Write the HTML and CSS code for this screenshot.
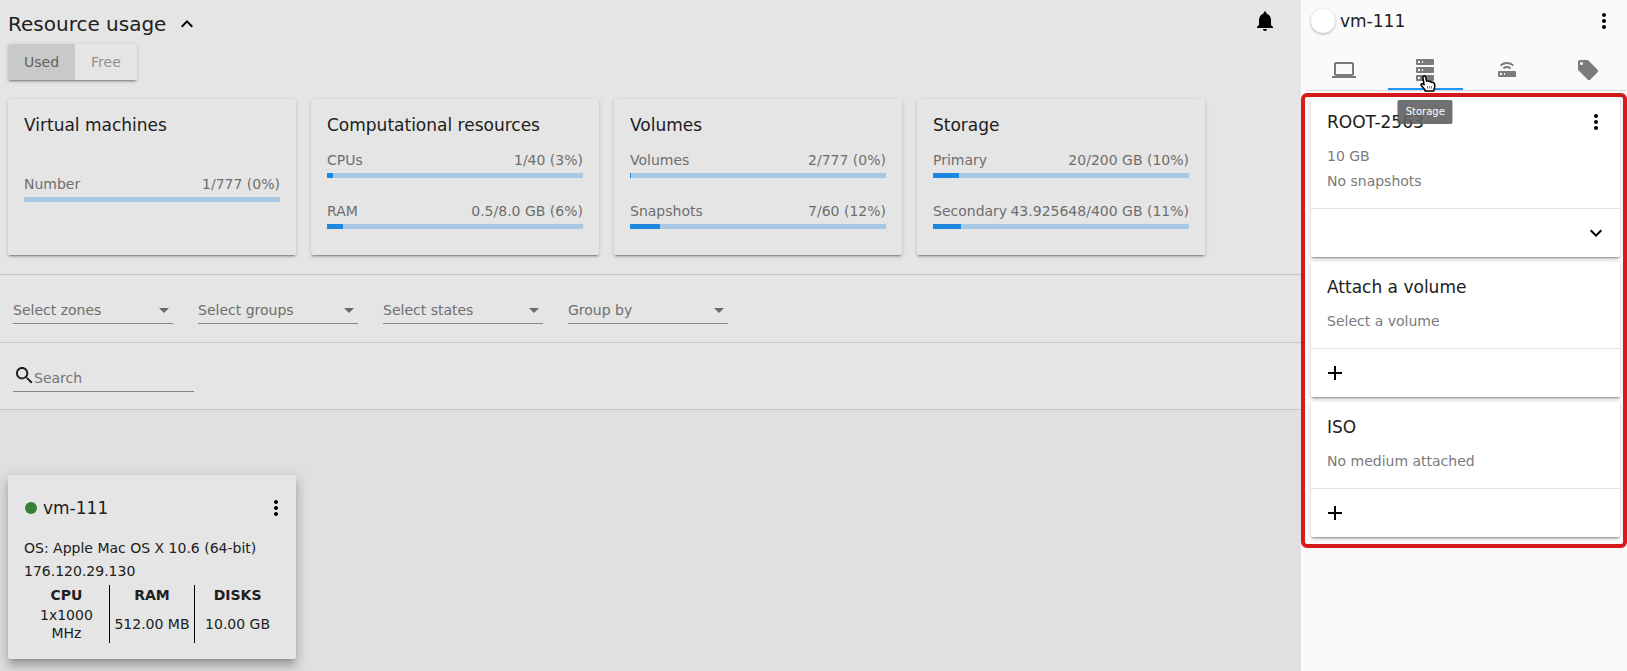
FILE: index.html
```html
<!DOCTYPE html>
<html lang="en">
<head>
<meta charset="utf-8">
<meta name="viewport" content="width=device-width, initial-scale=1">
<title>Virtual machines</title>
<link rel="stylesheet" href="styles.css">
</head>
<body>
<svg class="sprite" aria-hidden="true">
  <symbol id="dots" viewBox="0 0 24 24"><path d="M12 8c1.100 0 2-.9 2-2s-.9-2-2-2-2 .9-2 2 .9 2 2 2zm0 2c-1.100 0-2 .9-2 2s.9 2 2 2 2-.9 2-2-.9-2-2-2zm0 6c-1.100 0-2 .9-2 2s.9 2 2 2 2-.9 2-2-.9-2-2-2z"/></symbol>
  <symbol id="plus" viewBox="0 0 24 24"><path d="M19 13h-6v6h-2v-6H5v-2h6V5h2v6h6v2z"/></symbol>
  <symbol id="arrow" viewBox="0 0 10 5"><path d="M0 0h10L5 5z"/></symbol>
</svg>
<div class="app">
  <main class="main">
    <section class="usage">
      <header class="usage-header">
        <h1 class="usage-title">Resource usage</h1>
        <button class="icon-button" aria-label="Collapse">
          <svg class="icon" viewBox="0 0 24 24"><path d="M12 8l-6 6 1.410 1.410L12 10.830l4.590 4.580L18 14z"/></svg>
        </button>
        <button class="icon-button bell" aria-label="Notifications">
          <svg class="icon" viewBox="0 0 24 24"><path d="M12 22c1.100 0 2-.9 2-2h-4c0 1.100.89 2 2 2zm6-6v-5c0-3.070-1.640-5.640-4.500-6.320V4c0-.83-.67-1.500-1.500-1.500s-1.500.67-1.500 1.500v.68C7.630 5.360 6 7.920 6 11v5l-2 2v1h16v-1l-2-2z"/></svg>
        </button>
      </header>
      <div class="toggle">
        <button class="toggle-option selected" aria-pressed="true">Used</button>
        <button class="toggle-option" aria-pressed="false">Free</button>
      </div>
      <div class="usage-cards">
        <article class="card usage-card">
          <h2 class="card-title">Virtual machines</h2>
          <div class="meters">
            <div><div class="meter-label"><span>Number</span><span>1/777 (0%)</span></div><div class="bar"><div class="bar-fill" style="width:0%"></div></div></div>
          </div>
        </article>
        <article class="card usage-card">
          <h2 class="card-title">Computational resources</h2>
          <div class="meters">
            <div><div class="meter-label"><span>CPUs</span><span>1/40 (3%)</span></div><div class="bar"><div class="bar-fill" style="width:2.5%"></div></div></div>
            <div><div class="meter-label"><span>RAM</span><span>0.5/8.0 GB (6%)</span></div><div class="bar"><div class="bar-fill" style="width:6.25%"></div></div></div>
          </div>
        </article>
        <article class="card usage-card">
          <h2 class="card-title">Volumes</h2>
          <div class="meters">
            <div><div class="meter-label"><span>Volumes</span><span>2/777 (0%)</span></div><div class="bar"><div class="bar-fill" style="width:0.26%"></div></div></div>
            <div><div class="meter-label"><span>Snapshots</span><span>7/60 (12%)</span></div><div class="bar"><div class="bar-fill" style="width:11.67%"></div></div></div>
          </div>
        </article>
        <article class="card usage-card">
          <h2 class="card-title">Storage</h2>
          <div class="meters">
            <div><div class="meter-label"><span>Primary</span><span>20/200 GB (10%)</span></div><div class="bar"><div class="bar-fill" style="width:10%"></div></div></div>
            <div><div class="meter-label"><span>Secondary</span><span>43.925648/400 GB (11%)</span></div><div class="bar"><div class="bar-fill" style="width:10.98%"></div></div></div>
          </div>
        </article>
      </div>
    </section>
    <section class="filters">
      <div class="select-field"><select class="select" aria-label="Select zones"><option>Select zones</option></select><svg class="select-arrow"><use href="#arrow"/></svg></div>
      <div class="select-field"><select class="select" aria-label="Select groups"><option>Select groups</option></select><svg class="select-arrow"><use href="#arrow"/></svg></div>
      <div class="select-field"><select class="select" aria-label="Select states"><option>Select states</option></select><svg class="select-arrow"><use href="#arrow"/></svg></div>
      <div class="select-field"><select class="select" aria-label="Group by"><option>Group by</option></select><svg class="select-arrow"><use href="#arrow"/></svg></div>
    </section>
    <section class="search">
      <label class="search-field">
        <svg class="search-icon" viewBox="3 3 18 18"><path d="M15.500 14h-.79l-.28-.27C15.410 12.590 16 11.110 16 9.500 16 5.910 13.090 3 9.500 3S3 5.910 3 9.500 5.910 16 9.500 16c1.610 0 3.090-.59 4.230-1.570l.27.28v.79l5 4.990L20.490 19l-4.990-5zm-6 0C7.010 14 5 11.990 5 9.500S7.010 5 9.500 5 14 7.010 14 9.500 11.990 14 9.500 14z"/></svg>
        <input class="search-input" type="text" placeholder="Search" aria-label="Search">
      </label>
    </section>
    <section class="machines">
      <article class="card vm-card">
        <header class="vm-header">
          <span class="status"></span>
          <h2 class="card-title">vm-111</h2>
          <button class="icon-button push" aria-label="Actions for vm-111"><svg class="icon"><use href="#dots"/></svg></button>
        </header>
        <p class="vm-line">OS: Apple Mac OS X 10.6 (64-bit)</p>
        <p class="vm-line">176.120.29.130</p>
        <table class="specs">
          <thead><tr><th>CPU</th><th>RAM</th><th>DISKS</th></tr></thead>
          <tbody><tr><td>1x1000 MHz</td><td>512.00 MB</td><td>10.00 GB</td></tr></tbody>
        </table>
      </article>
    </section>
  </main>
  <aside class="sidebar">
    <header class="side-header">
      <span class="avatar"></span>
      <h2 class="card-title">vm-111</h2>
      <button class="icon-button push" aria-label="Actions"><svg class="icon"><use href="#dots"/></svg></button>
    </header>
    <nav class="tabs">
      <button class="tab" aria-label="Virtual machine"><svg class="icon" viewBox="0 0 24 24"><path d="M20 18c1.100 0 1.990-.9 1.990-2L22 6c0-1.100-.9-2-2-2H4c-1.100 0-2 .9-2 2v10c0 1.100.9 2 2 2H0v2h24v-2h-4zM4 6h16v10H4V6z"/></svg></button>
      <button class="tab active" aria-label="Storage"><svg class="icon" viewBox="0 0 24 24"><path d="M4 1h16a1 1 0 0 1 1 1v4a1 1 0 0 1-1 1H4a1 1 0 0 1-1-1V2a1 1 0 0 1 1-1M4 9h16a1 1 0 0 1 1 1v4a1 1 0 0 1-1 1H4a1 1 0 0 1-1-1v-4a1 1 0 0 1 1-1M4 17h16a1 1 0 0 1 1 1v4a1 1 0 0 1-1 1H4a1 1 0 0 1-1-1v-4a1 1 0 0 1 1-1M9 5h1V3H9v2M9 13h1v-2H9v2M9 21h1v-2H9v2M5 3v2h2V3H5M5 11v2h2v-2H5M5 19v2h2v-2H5z"/></svg>
        <svg class="pointer" viewBox="0 0 16 17"><path d="M3.200 1.300C4.200.5 5.500 1 5.700 2.200L6.500 6.200c.8-.6 2-.4 2.500.4.900-.4 2-.1 2.500.7 1.200-.3 2.700.2 3 1.500.4 1.700.3 3.400-.1 4.800L13.600 16H5v-1.200L1.200 10.600c-.6-.8-.2-1.700.6-1.900.8-.2 1.600.2 2.300 1L2.900 3c-.1-.7-.1-1.300.3-1.700z" fill="#fff" stroke="#000" stroke-width="1.500" stroke-linejoin="round"/><path d="M7.500 11v2.500M9.500 11v2.500M11.500 11v2.500" stroke="#555" fill="none" stroke-width=".8"/></svg>
        <span class="tooltip" role="tooltip">Storage</span>
      </button>
      <button class="tab" aria-label="Network"><svg class="icon" viewBox="0 0 24 24"><path d="M4 13h16a1 1 0 0 1 1 1v4a1 1 0 0 1-1 1H4a1 1 0 0 1-1-1v-4a1 1 0 0 1 1-1M9 17h1v-2H9v2M5 15v2h2v-2H5M19 6.930L17.600 8.340C16.150 6.890 14.150 6 11.930 6 9.720 6 7.720 6.890 6.270 8.340L4.870 6.930C6.680 5.120 9.180 4 11.930 4c2.760 0 5.260 1.120 7.070 2.930M16.170 9.760l-1.400 1.410C14.040 10.450 13.040 10 11.930 10s-2.110.45-2.830 1.170L7.700 9.760C8.780 8.670 10.280 8 11.930 8s3.150.67 4.240 1.760z"/></svg></button>
      <button class="tab" aria-label="Tags"><svg class="icon" viewBox="0 0 24 24"><path d="M5.500 7A1.500 1.500 0 0 1 4 5.500 1.500 1.500 0 0 1 5.500 4 1.500 1.500 0 0 1 7 5.500 1.500 1.500 0 0 1 5.500 7M21.410 11.580l-9-9C12.050 2.220 11.550 2 11 2H4c-1.110 0-2 .89-2 2v7c0 .55.22 1.050.59 1.410l8.990 9c.37.36.87.59 1.420.59s1.050-.23 1.410-.59l7-7c.37-.36.59-.86.59-1.410 0-.56-.23-1.060-.59-1.420z"/></svg></button>
    </nav>
    <div class="storage">
      <article class="card side-card">
        <div class="side-body">
          <div class="side-title"><h3 class="card-title">ROOT-2563</h3><button class="icon-button push" aria-label="Volume actions"><svg class="icon"><use href="#dots"/></svg></button></div>
          <p class="side-line">10 GB</p>
          <p class="side-line">No snapshots</p>
        </div>
        <footer class="side-footer"><button class="icon-button push" aria-label="Expand"><svg class="icon" viewBox="0 0 24 24"><path d="M16.590 8.590L12 13.170 7.410 8.590 6 10l6 6 6-6z"/></svg></button></footer>
      </article>
      <article class="card side-card">
        <div class="side-body">
          <div class="side-title"><h3 class="card-title">Attach a volume</h3></div>
          <p class="side-line">Select a volume</p>
        </div>
        <footer class="side-footer"><button class="icon-button" aria-label="Attach a volume"><svg class="icon"><use href="#plus"/></svg></button></footer>
      </article>
      <article class="card side-card">
        <div class="side-body">
          <div class="side-title"><h3 class="card-title">ISO</h3></div>
          <p class="side-line">No medium attached</p>
        </div>
        <footer class="side-footer"><button class="icon-button" aria-label="Attach ISO"><svg class="icon"><use href="#plus"/></svg></button></footer>
      </article>
    </div>
  </aside>
</div>
</body>
</html>
```
FILE: styles.css
```css
* { box-sizing: border-box; }

body {
  margin: 0;
  font-family: "DejaVu Sans", sans-serif;
  font-size: 14px;
  line-height: 18px;
  color: #202020;
}

h1, h2, h3, p { margin: 0; font-weight: 400; }

button, select, input { font: inherit; color: inherit; }

.sprite { display: none; }

.icon { display: block; width: 24px; height: 24px; fill: currentColor; }

.icon-button {
  padding: 0;
  border: 0;
  background: none;
  color: #000;
  cursor: pointer;
}

.push { margin-left: auto; }

.app { display: flex; min-height: 100vh; }

.main { flex: 1; min-width: 0; background: #e0e0e0; }

.card {
  border-radius: 2px;
  box-shadow: 0 3px 1px -2px rgba(0, 0, 0, .2), 0 2px 2px 0 rgba(0, 0, 0, .14), 0 1px 5px 0 rgba(0, 0, 0, .12);
}

.card-title { font-size: 17px; line-height: 20px; }

.usage, .filters, .search {
  background: #e5e5e5;
  border-bottom: 1px solid #c6c6c6;
}

.usage { padding: 0 8px 19px; }

.usage-header { display: flex; align-items: center; height: 44px; padding-top: 4px; }
.usage-title { margin-right: 9px; font-size: 20px; line-height: 24px; }
.bell { margin: 0 16px 6px auto; }

.toggle {
  display: inline-flex;
  height: 36px;
  margin-bottom: 19px;
  border-radius: 2px;
  box-shadow: 0 3px 1px -2px rgba(0, 0, 0, .2), 0 2px 2px 0 rgba(0, 0, 0, .14), 0 1px 5px 0 rgba(0, 0, 0, .12);
}
.toggle-option {
  padding: 0 16px;
  border: 0;
  border-radius: 0 2px 2px 0;
  background: #e5e5e5;
  color: #919191;
}
.toggle-option.selected { border-radius: 2px 0 0 2px; background: #c9c9c9; color: #626262; }

.usage-cards { display: grid; grid-template-columns: repeat(auto-fill, 288px); gap: 15px; }
.usage-card { display: flex; flex-direction: column; gap: 16px; padding: 16px 16px 26px; }
.meters { display: flex; flex-direction: column; gap: 24px; color: #6e6e6e; }
.meters > :only-child { margin-top: 24px; }
.meter-label { display: flex; justify-content: space-between; margin-bottom: 4px; white-space: nowrap; }
.bar { height: 5px; background: #a7c7e2; }
.bar-fill { height: 5px; background: #1e87df; }

.filters { display: flex; flex-wrap: wrap; gap: 25px; padding: 21px 13px 18px; }
.select-field { position: relative; width: 160px; }
.select {
  appearance: none;
  display: block;
  width: 100%;
  height: 28px;
  padding: 0 20px 0 0;
  border: 0;
  border-bottom: 1px solid #858585;
  border-radius: 0;
  background: none;
  color: #6e6e6e;
}
.select-arrow { position: absolute; top: 12px; right: 4px; width: 10px; height: 5px; fill: #6a6a6a; pointer-events: none; }

.search { padding: 21px 13px 17px; }
.search-field {
  display: flex;
  align-items: flex-start;
  width: 181px;
  height: 28px;
  padding-left: 3px;
  border-bottom: 1px solid #858585;
}
.search-icon { width: 17px; height: 17px; margin: 3px 1px 0 0; fill: #202020; }
.search-input { flex: 1; min-width: 0; height: 18px; margin-top: 5px; padding: 0; border: 0; outline: 0; background: none; }
.search-input::placeholder { color: #757575; opacity: 1; }

.machines { padding: 65px 8px 12px; }
.vm-card {
  width: 288px;
  padding: 16px;
  background: #e5e5e5;
  box-shadow: 0 5px 5px -3px rgba(0, 0, 0, .2), 0 8px 10px 1px rgba(0, 0, 0, .14), 0 3px 14px 2px rgba(0, 0, 0, .12);
}
.vm-header { display: flex; align-items: center; height: 34px; margin-bottom: 12px; }
.vm-header .push { margin-right: -8px; }
.status { width: 12px; height: 12px; margin: 0 6px 0 1px; border-radius: 50%; background: #348036; }
.vm-line { line-height: 23px; }
.specs { width: 100%; margin-top: 2px; table-layout: fixed; border-collapse: collapse; text-align: center; }
.specs th, .specs td { padding: 0; }
.specs th { height: 20px; }
.specs td { height: 38px; }
.specs th + th, .specs td + td { border-left: 1px solid #000; }

.sidebar { width: 326px; background: #fafafa; }
.side-header { display: flex; align-items: center; height: 44px; padding: 0 11px 2px 10px; }
.avatar {
  width: 24px;
  height: 24px;
  margin-right: 5px;
  border-radius: 50%;
  background: #fff;
  box-shadow: 0 1px 3px rgba(0, 0, 0, .3);
}

.tabs { display: flex; gap: 6px; margin: 5px 1px 2px 5px; border-bottom: 1px solid #d8d8d8; }
.tab {
  position: relative;
  flex: 1;
  display: flex;
  justify-content: center;
  height: 41px;
  padding: 9px 0 0;
  border: 0;
  background: none;
  color: #7b7b7b;
}
.tab.active { border-bottom: 2px solid #2196f3; }
.pointer { position: absolute; top: 26px; left: 32px; z-index: 2; width: 16px; height: 17px; }
.tooltip {
  position: absolute;
  top: 51px;
  left: 50%;
  z-index: 1;
  transform: translateX(-50%);
  padding: 3px 8px;
  border-radius: 2px;
  background: rgba(97, 97, 97, .9);
  color: #fff;
  font-size: 10px;
}

.storage {
  display: flex;
  flex-direction: column;
  gap: 5px;
  padding: 0 3px 7px 6px;
  border: 4px solid #d71a1a;
  border-radius: 6px;
}
.side-card { background: #fff; }
.side-body { padding: 15px 16px 14px; }
.side-title { display: flex; align-items: center; height: 20px; margin-bottom: 12px; }
.side-title .push { margin-right: -4px; }
.side-line { line-height: 25px; color: #7b7b7b; }
.side-footer { display: flex; align-items: center; height: 49px; padding: 0 12px; border-top: 1px solid #e0e0e0; }
```
